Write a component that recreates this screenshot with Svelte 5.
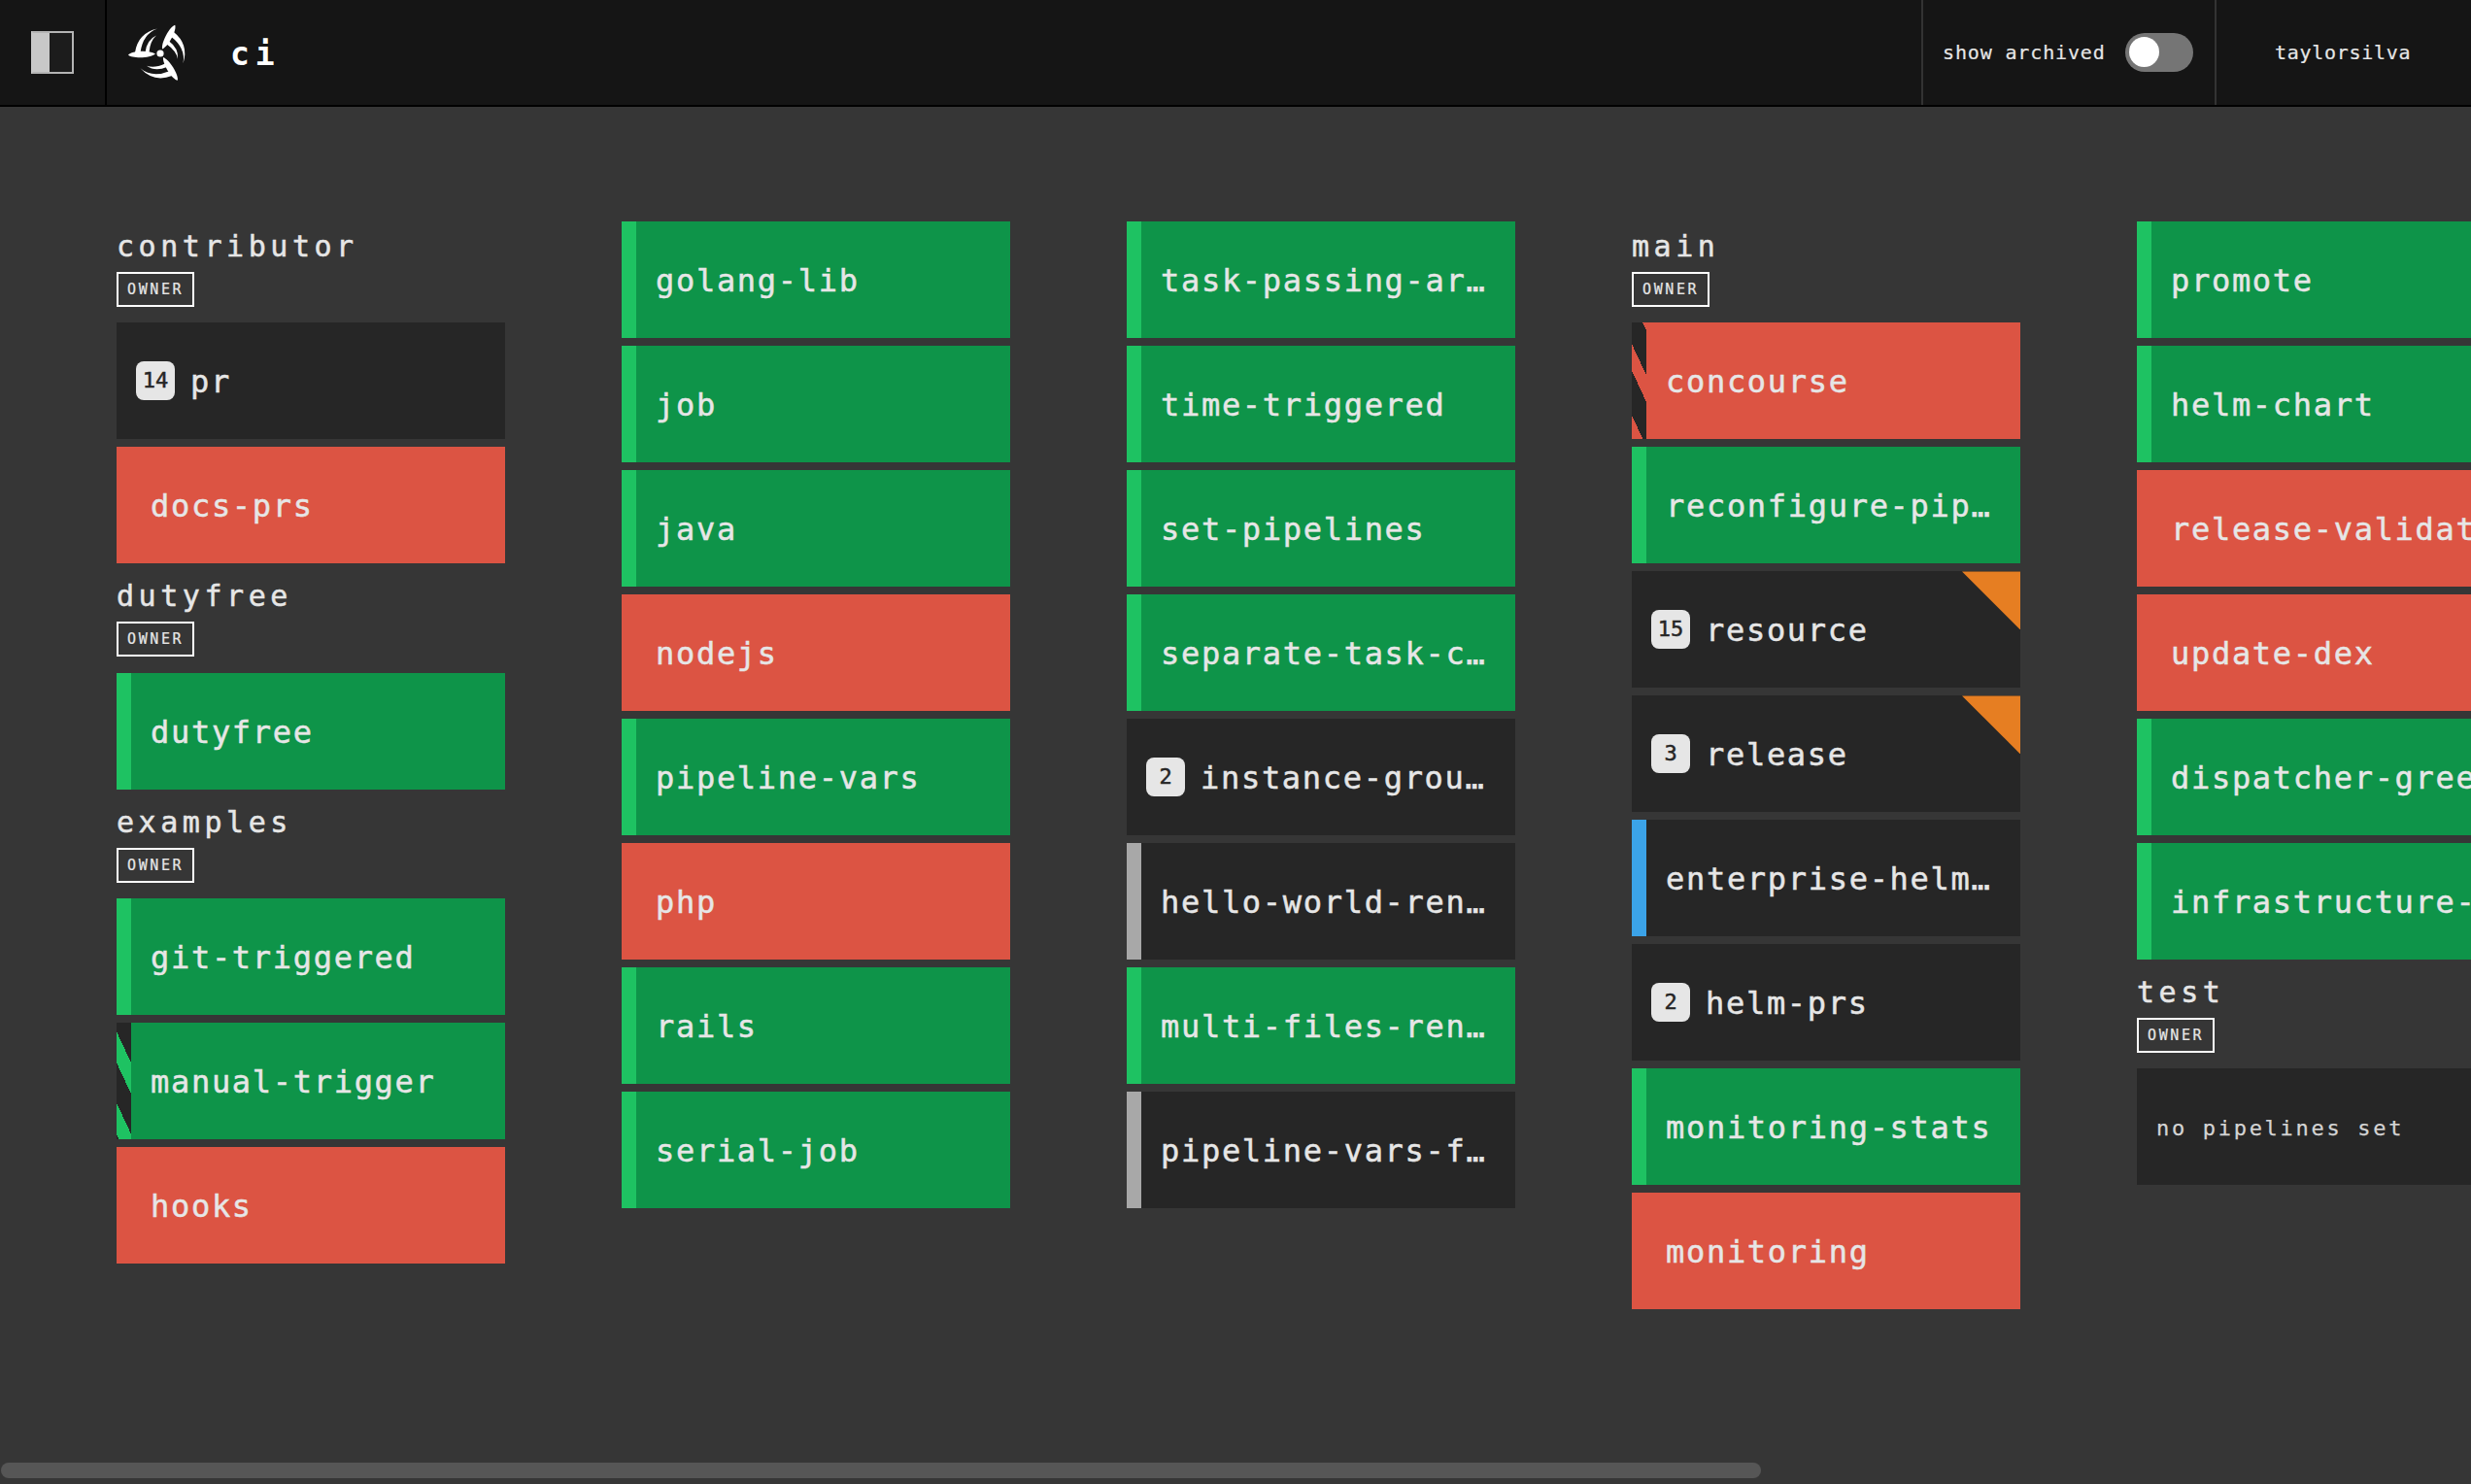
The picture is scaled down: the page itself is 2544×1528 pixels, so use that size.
<script>
  // col: pipelines flow top to bottom, a team header sits in between where the team changes
  const columns = [
    [
      { team: 'contributor' },
      { name: 'pr', badge: 14 },
      { name: 'docs-prs', status: 'failed' },
      { team: 'dutyfree' },
      { name: 'dutyfree', status: 'ok' },
      { team: 'examples' },
      { name: 'git-triggered', status: 'ok' },
      { name: 'manual-trigger', status: 'ok', running: 'a' },
      { name: 'hooks', status: 'failed' }
    ],
    [
      { name: 'golang-lib', status: 'ok' },
      { name: 'job', status: 'ok' },
      { name: 'java', status: 'ok' },
      { name: 'nodejs', status: 'failed' },
      { name: 'pipeline-vars', status: 'ok' },
      { name: 'php', status: 'failed' },
      { name: 'rails', status: 'ok' },
      { name: 'serial-job', status: 'ok' }
    ],
    [
      { name: 'task-passing-artifacts', status: 'ok' },
      { name: 'time-triggered', status: 'ok' },
      { name: 'set-pipelines', status: 'ok' },
      { name: 'separate-task-containers', status: 'ok' },
      { name: 'instance-groups-demo', badge: 2 },
      { name: 'hello-world-rename', status: 'pending' },
      { name: 'multi-files-rename', status: 'ok' },
      { name: 'pipeline-vars-files', status: 'pending' }
    ],
    [
      { team: 'main' },
      { name: 'concourse', status: 'failed', running: 'b' },
      { name: 'reconfigure-pipelines', status: 'ok' },
      { name: 'resource', badge: 15, corner: true },
      { name: 'release', badge: 3, corner: true },
      { name: 'enterprise-helm-chart', status: 'paused' },
      { name: 'helm-prs', badge: 2 },
      { name: 'monitoring-stats', status: 'ok' },
      { name: 'monitoring', status: 'failed' }
    ],
    [
      { name: 'promote', status: 'ok' },
      { name: 'helm-chart', status: 'ok' },
      { name: 'release-validation', status: 'failed' },
      { name: 'update-dex', status: 'failed' },
      { name: 'dispatcher-green', status: 'ok' },
      { name: 'infrastructure-tf', status: 'ok' },
      { team: 'test' },
      { empty: 'no pipelines set' }
    ]
  ];
</script>

<div class="page">
  <header class="topbar">
    <button type="button" class="sidebar-toggle" aria-label="toggle sidebar">
      <span class="sidebar-icon"></span>
    </button>
    <svg class="logo" viewBox="-35 -35 70 70" aria-label="logo">
      {#each [0, 120, 240] as angle}
        <g transform="rotate({angle})" fill="#fff">
          <path d="M-33 1.5 C-30 -2.5 -12 -4 -5 0.5 C-10 5 -29 5.5 -33 1.5 Z" />
          <path d="M-26 -1 Q-23 -21 -3 -25.5 Q-18 -20 -20.5 -1 Z" />
          <path d="M-15.5 -1 Q-14 -14 -4 -18.5 Q-10.5 -13 -11.5 -1 Z" />
        </g>
      {/each}
      <circle r="3.6" fill="#fff" />
    </svg>
    <div class="pipeline-title">ci</div>
    <div class="spacer"></div>
    <div class="archived">
      <span>show archived</span>
      <span class="switch"><span class="knob"></span></span>
    </div>
    <div class="user">taylorsilva</div>
  </header>

  <main class="dashboard">
    {#each columns as column}
      <div class="column">
        {#each column as item}
          {#if item.team}
            <div class="team">
              <div class="team-name">{item.team}</div>
              <div class="owner">OWNER</div>
            </div>
          {:else if item.empty}
            <div class="card dark empty">{item.empty}</div>
          {:else}
            <div class="card {item.status ?? 'dark'}" class:corner={item.corner}>
              {#if item.running}
                <span class="bar stripe-{item.running}"></span>
              {:else if item.status && item.status !== 'failed'}
                <span class="bar"></span>
              {/if}
              {#if item.badge}
                <span class="badge">{item.badge}</span>
              {/if}
              <span class="name">{item.name}</span>
            </div>
          {/if}
        {/each}
      </div>
    {/each}
  </main>

  <div class="scroll-thumb"></div>
</div>

<style>
  :global(body) {
    background: #363636;
  }

  .page {
    position: relative;
    height: 1528px;
    overflow: hidden;
    background: #363636;
    color: #e6e6e6;
    font-family: 'DejaVu Sans Mono', monospace;
    -webkit-text-stroke: 0.5px currentColor;
  }

  .topbar {
    display: flex;
    align-items: stretch;
    height: 108px;
    background: #151515;
    border-bottom: 2px solid #000;
  }

  .sidebar-toggle {
    display: flex;
    align-items: center;
    justify-content: center;
    width: 110px;
    padding: 0;
    background: none;
    border: none;
    border-right: 2px solid #000;
  }

  .sidebar-icon {
    display: block;
    box-sizing: border-box;
    width: 44px;
    height: 44px;
    background: linear-gradient(to right, #c8c8c8 17px, #1c1c1c 17px);
    border: 2px solid #b4b4b4;
    border-left-color: #c8c8c8;
  }

  .logo {
    width: 70px;
    height: 70px;
    margin: 20px -5px 0 20px;
  }

  .pipeline-title {
    align-self: center;
    margin: 2px 0 0 42px;
    font-size: 33px;
    font-weight: 700;
    letter-spacing: 6px;
    color: #fff;
    -webkit-text-stroke: 0;
  }

  .spacer {
    flex: 1;
  }

  .archived {
    display: flex;
    align-items: center;
    width: 302px;
    padding-left: 20px;
    box-sizing: border-box;
    border-left: 2px solid #333;
    font-size: 20px;
    letter-spacing: 0.85px;
    -webkit-text-stroke: 0.2px currentColor;
  }

  .switch {
    display: block;
    position: relative;
    width: 70px;
    height: 40px;
    margin-left: 20px;
    background: #757575;
    border-radius: 20px;
  }

  .knob {
    position: absolute;
    left: 4px;
    top: 4px;
    width: 31px;
    height: 31px;
    background: #fff;
    border-radius: 50%;
  }

  .user {
    display: flex;
    align-items: center;
    width: 264px;
    padding-left: 60px;
    box-sizing: border-box;
    border-left: 2px solid #333;
    font-size: 20px;
    letter-spacing: 0.7px;
    -webkit-text-stroke: 0.2px currentColor;
  }

  .dashboard {
    display: flex;
    gap: 120px;
    padding: 118px 0 0 120px;
  }

  .column {
    display: flex;
    flex-direction: column;
    flex: none;
    gap: 8px;
    width: 400px;
  }

  .team {
    display: flex;
    flex-direction: column;
    justify-content: flex-end;
    height: 96.4px;
    padding-bottom: 8.4px;
    box-sizing: border-box;
  }

  .team-name {
    font-size: 30px;
    line-height: 36px;
    letter-spacing: 4.55px;
    margin-bottom: 8px;
  }

  .owner {
    box-sizing: border-box;
    width: 80px;
    height: 36px;
    line-height: 32px;
    padding-left: 9px;
    border: 2px solid #fff;
    font-size: 15px;
    letter-spacing: 2.6px;
    -webkit-text-stroke: 0.2px currentColor;
  }

  .card {
    position: relative;
    display: flex;
    align-items: center;
    height: 120px;
    padding: 2px 28px 0 35px;
    box-sizing: border-box;
    font-size: 32px;
    letter-spacing: 1.7px;
  }

  .ok { background: #0e9449; --bar: #1ec262; }
  .failed { background: #dc5443; --bar: #dc5443; }
  .pending { background: #262626; --bar: #a8a8a8; }
  .paused { background: #262626; --bar: #3ba3e8; }
  .dark { background: #262626; padding-left: 20px; }

  .bar {
    position: absolute;
    left: 0;
    top: 0;
    bottom: 0;
    width: 15px;
    background: var(--bar);
  }

  .stripe-a {
    background: repeating-linear-gradient(-115deg, #262626 0 17.5px, var(--bar) 17.5px 31px);
  }

  .stripe-b {
    background: repeating-linear-gradient(-115deg, var(--bar) 0 3.6px, #262626 3.6px 23px, var(--bar) 23px 31px);
  }

  .corner::after {
    content: '';
    position: absolute;
    right: 0;
    top: 0;
    width: 60px;
    height: 60px;
    background: #e67e22;
    clip-path: polygon(0 0, 100% 0, 100% 100%);
  }

  .badge {
    flex: none;
    width: 40px;
    height: 40px;
    margin: -2px 16px 0 0;
    line-height: 40px;
    text-align: center;
    background: #e6e6e6;
    color: #262626;
    border-radius: 8px;
    font-size: 22px;
    letter-spacing: 0;
  }

  .name {
    min-width: 0;
    overflow: hidden;
    text-overflow: ellipsis;
    white-space: nowrap;
  }

  .empty {
    font-size: 22px;
    letter-spacing: 2.7px;
    color: #d4d4d4;
    -webkit-text-stroke: 0.25px currentColor;
  }

  .scroll-thumb {
    position: absolute;
    left: 1px;
    bottom: 6px;
    width: 1812px;
    height: 16px;
    background: #565656;
    border-radius: 8px;
  }
</style>
